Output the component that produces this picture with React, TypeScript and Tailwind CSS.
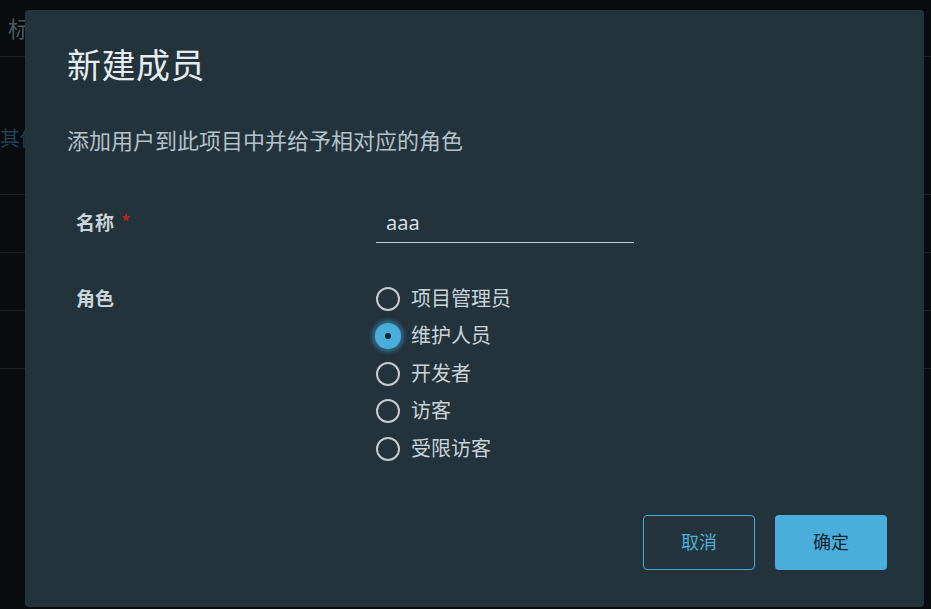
import React from 'react';

const roles = ['项目管理员', '维护人员', '开发者', '访客', '受限访客'];

function Radio({ checked, label }: { checked: boolean; label: string }) {
  return (
    <label className="flex items-center h-[37.5px]">
      {checked ? (
        <span className="w-[26px] h-[26px] -ml-px rounded-full bg-[#49aedb] shadow-[0_0_4px_3px_rgba(73,174,219,0.45)] flex items-center justify-center">
          <span className="w-[6px] h-[6px] rounded-full bg-[#17252c]" />
        </span>
      ) : (
        <span className="w-[24px] h-[24px] rounded-full border-2 border-[#c3cbcf]" />
      )}
      <span className={`text-[20px] text-[#c9d3d8] ${checked ? 'ml-[10px]' : 'ml-[11px]'}`}>{label}</span>
    </label>
  );
}

export default function App() {
  const font = { fontFamily: '"Noto Sans", "Noto Sans CJK SC", sans-serif' };
  return (
    <div className="relative w-[931px] h-[609px] bg-[#080c0f] overflow-hidden" style={font}>
      {/* page behind the dialog */}
      <div className="flex flex-col">
        <div className="h-[57px] border-b border-[#1b2226] flex items-center pl-[8px] text-[22px] text-[#4c565b]">标签</div>
        <div className="h-[138px] border-b border-[#1b2226] pt-[68px] pl-0 text-[20px] leading-[28px] text-[#1f4256]">其他</div>
        <div className="h-[58px] border-b border-[#1b2226]" />
        <div className="h-[58px] border-b border-[#1b2226]" />
        <div className="h-[58px] border-b border-[#1b2226]" />
      </div>

      {/* dialog */}
      <div className="absolute left-[25px] top-[10px] w-[899px] h-[597px] rounded-[4px] bg-[#22333b] flex flex-col pl-[42px] pr-[37px] pt-[35px]">
        <h2 className="text-[34px] leading-[40px] text-[#e6ecee] tracking-[0.5px]">新建成员</h2>
        <p className="mt-[40px] text-[22px] leading-[30px] text-[#b3c1c8]">添加用户到此项目中并给予相对应的角色</p>

        <div className="mt-[55px] flex">
          <div className="w-[309px] pl-[9px] flex items-start">
            <span className="text-[19px] leading-[26px] font-bold text-[#c9d3d8]">名称</span>
            <span className="ml-[8px] text-[14px] leading-[20px] font-bold text-[#c1271b]">*</span>
          </div>
          <div className="w-[258px] border-b border-[#c0c9cd] pb-[6px] pl-[10px]">
            <span className="text-[20px] leading-[26px] text-[#d5dde0]">aaa</span>
          </div>
        </div>

        <div className="mt-[43px] flex">
          <div className="w-[309px] pl-[9px]">
            <span className="text-[19px] leading-[26px] font-bold text-[#c9d3d8]">角色</span>
          </div>
          <div className="-mt-[6px] flex flex-col">
            {roles.map((r, i) => (
              <Radio key={r} label={r} checked={i === 1} />
            ))}
          </div>
        </div>

        <div className="mt-auto mb-[37px] flex justify-end gap-[20px]">
          <button className="w-[112px] h-[55px] rounded-[4px] border border-[#48a8d4] text-[18px] text-[#4eaed9]">取消</button>
          <button className="w-[112px] h-[55px] rounded-[4px] bg-[#49aedb] text-[18px] text-[#17262d]">确定</button>
        </div>
      </div>
    </div>
  );
}
